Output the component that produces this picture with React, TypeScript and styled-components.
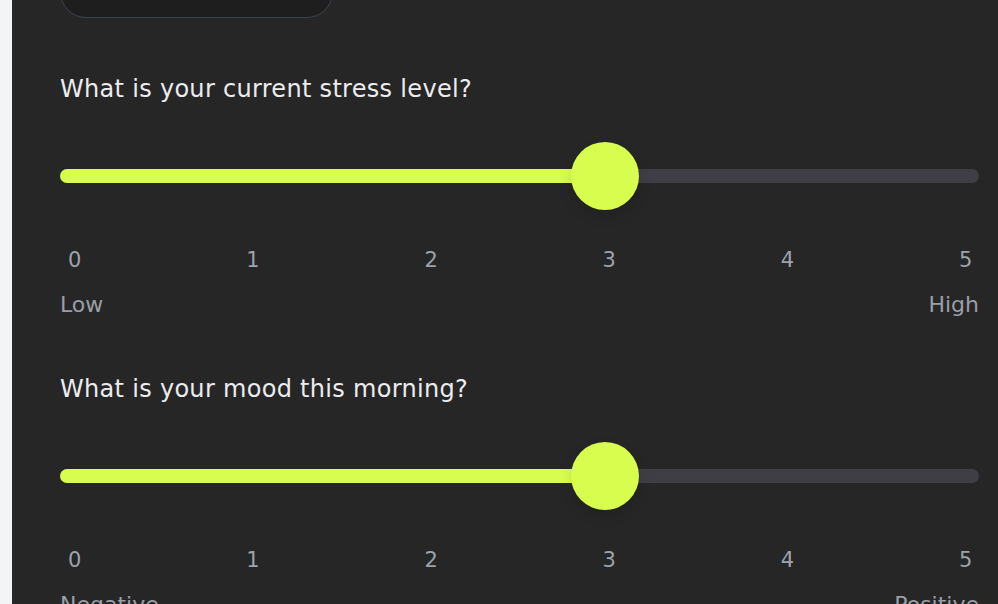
import React, { useState } from "react";
import styled, { createGlobalStyle } from "styled-components";

const GlobalStyle = createGlobalStyle`
  html, body { margin: 0; padding: 0; }
  body {
    background: #f3f4f6;
    font-family: "DejaVu Sans", "Liberation Sans", sans-serif;
    overflow: hidden;
  }
`;

const Page = styled.div`
  display: flex;
  height: 604px;
  width: 998px;
  overflow: hidden;
`;

const Rail = styled.div`
  width: 12px;
  flex: none;
  background: #f3f4f6;
`;

const Panel = styled.main`
  flex: 1;
  background: #262626;
  padding: 0 19px 0 48px;
  display: flex;
  flex-direction: column;
  gap: 56px;
`;

const TopButton = styled.button`
  width: 273px;
  height: 52px;
  margin-top: -34px;
  flex: none;
  background: #1e1e1f;
  border: 1.5px solid #3a4150;
  border-radius: 26px;
`;

const Section = styled.section`
  display: flex;
  flex-direction: column;
`;

const Question = styled.h2`
  margin: 0 0 38px;
  font-size: 24px;
  line-height: 30px;
  font-weight: 400;
  letter-spacing: 0.3px;
  color: #ececee;
`;

const Range = styled.input`
  -webkit-appearance: none;
  appearance: none;
  display: block;
  width: 100%;
  height: 68px;
  margin: 0;
  padding: 0;
  background: transparent;
  outline: none;

  &::-webkit-slider-runnable-track {
    height: 14px;
    border-radius: 7px;
    background: var(--track);
  }
  &::-webkit-slider-thumb {
    -webkit-appearance: none;
    appearance: none;
    width: 68px;
    height: 68px;
    margin-top: -27px;
    border-radius: 50%;
    background: #d8fd4f;
    border: none;
    box-shadow: 0 6px 14px rgba(0, 0, 0, 0.12);
  }
`;

const Ticks = styled.div`
  display: flex;
  justify-content: space-between;
  padding: 0 8px;
  margin-top: 38px;
  font-size: 21px;
  line-height: 24px;
  color: #9ea2ab;
`;

const Tick = styled.span`
  width: 12px;
  text-align: center;
`;

const Ends = styled.div`
  display: flex;
  justify-content: space-between;
  margin-top: 20px;
  font-size: 22px;
  line-height: 26px;
  color: #9a9ea6;
`;

const TRACK_W = 920;
const THUMB = 68;

function ScaleQuestion({ q, low, high, initial }: { q: string; low: string; high: string; initial: number }) {
  const [v, setV] = useState(initial);
  const center = THUMB / 2 + (v / 5) * (TRACK_W - THUMB);
  const pct = (center / TRACK_W) * 100;
  return (
    <Section>
      <Question>{q}</Question>
      <Range
        type="range"
        min={0}
        max={5}
        step={1}
        value={v}
        onChange={(e) => setV(Number(e.target.value))}
        style={{ ["--track" as any]: `linear-gradient(to right, #d8fd4f 0%, #d8fd4f ${pct}%, #3f3e45 ${pct}%, #3f3e45 100%)` }}
      />
      <Ticks>
        {[0, 1, 2, 3, 4, 5].map((n) => (
          <Tick key={n}>{n}</Tick>
        ))}
      </Ticks>
      <Ends>
        <span>{low}</span>
        <span>{high}</span>
      </Ends>
    </Section>
  );
}

export default function App() {
  return (
    <Page>
      <GlobalStyle />
      <Rail />
      <Panel>
        <TopButton aria-label="Back" />
        <ScaleQuestion q="What is your current stress level?" low="Low" high="High" initial={3} />
        <ScaleQuestion q="What is your mood this morning?" low="Negative" high="Positive" initial={3} />
      </Panel>
    </Page>
  );
}
